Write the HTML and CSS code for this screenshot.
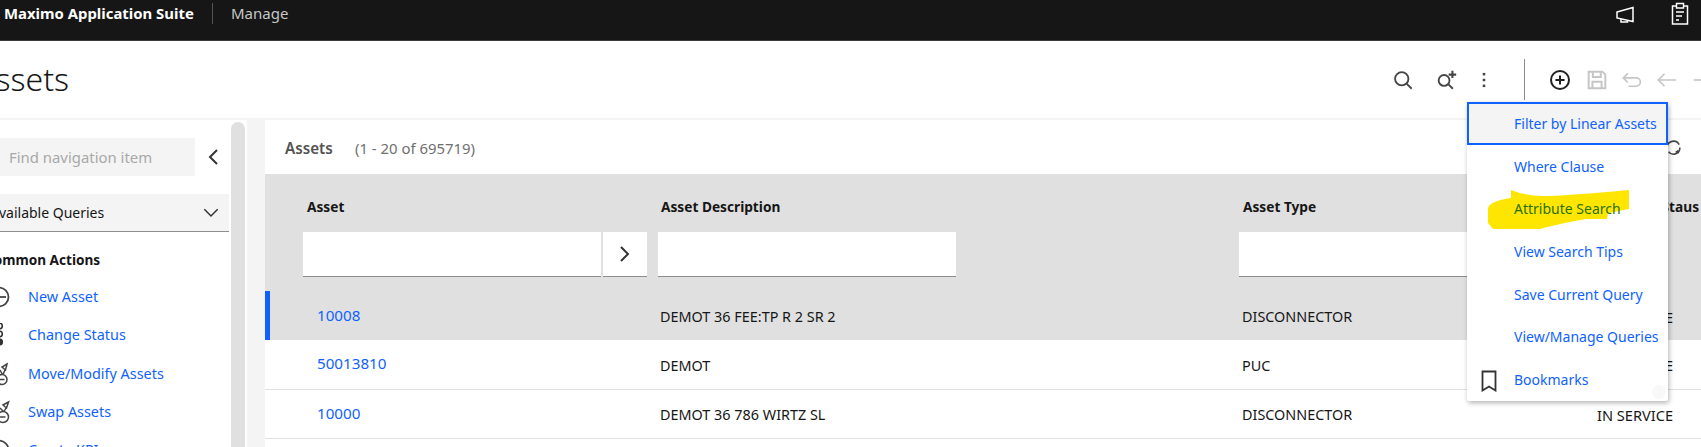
FILE: index.html
```html
<!DOCTYPE html>
<html lang="en">
<head>
<meta charset="utf-8">
<title>Assets - Maximo Application Suite</title>
<link rel="stylesheet" href="styles.css">
</head>
<body>
<div class="page">
  <header class="topbar">
    <div class="brand">Maximo Application Suite</div>
    <div class="appname">Manage</div>
    <div class="top-icons">
      <svg class="ic-top" viewBox="0 0 24 24" fill="none" stroke="#fff" stroke-width="1.5"><path d="M4 10 20 5.500v14L4 16z"/><path d="M8 17v3h6.500v-1.500"/></svg>
      <svg class="ic-top" viewBox="0 0 24 24" fill="none" stroke="#fff" stroke-width="1.5"><rect x="4.500" y="4" width="15" height="18"/><rect x="8.500" y="1.500" width="7" height="4.500" fill="#161616"/><path d="M8 10h8M8 14h6M8 18h3"/></svg>
    </div>
  </header>
  <div class="titlebar">
    <h1 class="title">Assets</h1>
    <div class="tools">
      <svg class="ic" viewBox="0 0 24 24" fill="none" stroke="#444" stroke-width="2.200"><circle cx="10.500" cy="10.500" r="8"/><path d="m16 16 6.500 6.500"/></svg>
      <svg class="ic tool-addq" viewBox="0 0 24 24" fill="none" stroke="#444" stroke-width="2.200"><circle cx="8.500" cy="12.500" r="6.500"/><path d="m13.500 17 5.500 5.500"/><path d="M18.500 1v8.500M14 5.500h9" stroke-width="2.500"/></svg>
      <svg class="ic tool-more" viewBox="0 0 24 24" fill="#444"><rect x="10.500" y="3.500" width="3" height="3"/><rect x="10.500" y="10.500" width="3" height="3"/><rect x="10.500" y="17.500" width="3" height="3"/></svg>
      <span class="tool-sep"></span>
      <svg class="ic" viewBox="0 0 24 24" fill="none" stroke="#222" stroke-width="2.400"><circle cx="12" cy="12" r="10.800"/><path d="M12 6.500v11M6.500 12h11"/></svg>
      <svg class="ic tool-save" viewBox="0 0 24 24" fill="none" stroke="#c6c6c6" stroke-width="2.400"><path d="M2 2h16.500L22 5.500V22H2z"/><path d="M7 2v6.500h9.500V2M6.500 22v-8h11v8"/></svg>
      <svg class="ic tool-undo" viewBox="0 0 24 24" fill="none" stroke="#c6c6c6" stroke-width="2"><path d="M7 4 1.500 9.500 7 15"/><path d="M1.500 9.500H17a5 5 0 0 1 0 10H8"/></svg>
      <svg class="ic tool-back" viewBox="0 0 24 24" fill="none" stroke="#c6c6c6" stroke-width="2"><path d="M9 4.500 1.500 12 9 19.500M1.500 12H23"/></svg>
      <svg class="ic tool-next" viewBox="0 0 24 24" fill="none" stroke="#c6c6c6" stroke-width="2"><path d="M2 12h22"/></svg>
    </div>
  </div>
  <div class="body">
    <aside class="side">
      <div class="side-col">
        <div class="find-row">
          <div class="find">Find navigation item</div>
          <svg class="chev-l" viewBox="0 0 16 24" fill="none" stroke="#333" stroke-width="2"><path d="M12 5 5 12l7 7"/></svg>
        </div>
        <div class="queries">
          <span class="queries-label">Available Queries</span>
          <svg class="chev-d" viewBox="0 0 24 16" fill="none" stroke="#333" stroke-width="1.800"><path d="m4 3.500 8 8 8-8"/></svg>
        </div>
        <div class="common">Common Actions</div>
        <ul class="actions">
          <li class="action">
            <svg class="aic" viewBox="0 0 24 24" fill="none" stroke="#444" stroke-width="1.800"><circle cx="-1" cy="12" r="9.500"/><path d="M-3 12h9"/></svg>
            <a>New Asset</a>
          </li>
          <li class="action">
            <svg class="aic" viewBox="0 0 24 24" fill="none" stroke="#333" stroke-width="1.600"><circle cx="-.5" cy="3" r="2.800"/><circle cx="-.5" cy="11" r="2.800"/><circle cx="-.5" cy="19" r="2.800" fill="#333"/></svg>
            <a>Change Status</a>
          </li>
          <li class="action">
            <svg class="aic" viewBox="0 0 24 24" fill="none" stroke="#444" stroke-width="1.500"><circle cx="2" cy="17.500" r="5"/><path d="M0 17.500h4.500M7 2 2 5l3.500 3zM5 8l-2 4.500M0 8l2.500 4.500"/></svg>
            <a>Move/Modify Assets</a>
          </li>
          <li class="action">
            <svg class="aic" viewBox="0 0 24 24" fill="none" stroke="#444" stroke-width="1.500"><circle cx="3" cy="17" r="5.500"/><path d="M0 17h5.500M8.500 2 3 5l3.500 3zM6 8l-2 3.500M0 8l3.500 3.500"/></svg>
            <a>Swap Assets</a>
          </li>
          <li class="action">
            <svg class="aic" viewBox="0 0 24 24" fill="none" stroke="#444" stroke-width="1.800"><circle cx="-1" cy="12" r="9.500"/></svg>
            <a>Create KPI</a>
          </li>
        </ul>
      </div>
      <div class="scrollbar"></div>
    </aside>
    <div class="gutter"></div>
    <main class="main">
      <div class="list-head">
        <span class="list-title">Assets</span>
        <span class="list-count">(1 - 20 of 695719)</span>
        <svg class="refresh" viewBox="0 0 24 24" fill="none" stroke="#444" stroke-width="2.200"><path d="M3 12A9 9 0 0 1 20 8"/><path d="M21 12a9 9 0 0 1-16 6"/><path d="M22 14l-1-3-3 2" transform="translate(-3 6)"/></svg>
      </div>
      <div class="table">
        <div class="row thead">
          <div class="cell c-asset"><span class="th">Asset</span></div>
          <div class="cell c-desc"><span class="th">Asset Description</span></div>
          <div class="cell c-type"><span class="th">Asset Type</span></div>
          <div class="cell c-status"><span class="th">Staus</span></div>
        </div>
        <div class="row filters">
          <div class="filter-asset">
            <div class="input i-asset"></div>
            <div class="input i-go"><svg class="chev-r" viewBox="0 0 16 24" fill="none" stroke="#333" stroke-width="2"><path d="m4 5 7 7-7 7"/></svg></div>
          </div>
          <div class="input i-desc"></div>
          <div class="input i-type"></div>
        </div>
        <div class="row data selected">
          <div class="cell c-asset"><a class="link">10008</a></div>
          <div class="cell c-desc">DEMOT 36 FEE:TP R 2 SR 2</div>
          <div class="cell c-type">DISCONNECTOR</div>
          <div class="cell c-status">IN SERVICE</div>
        </div>
        <div class="row data">
          <div class="cell c-asset"><a class="link">50013810</a></div>
          <div class="cell c-desc">DEMOT</div>
          <div class="cell c-type">PUC</div>
          <div class="cell c-status">IN SERVICE</div>
        </div>
        <div class="row data">
          <div class="cell c-asset"><a class="link">10000</a></div>
          <div class="cell c-desc">DEMOT 36 786 WIRTZ SL</div>
          <div class="cell c-type">DISCONNECTOR</div>
          <div class="cell c-status">IN SERVICE</div>
        </div>
      </div>
    </main>
  </div>
  <nav class="menu">
    <a class="mi focus">Filter by Linear Assets</a>
    <a class="mi">Where Clause</a>
    <a class="mi marked">
      <svg class="marker" viewBox="0 0 141 39" preserveAspectRatio="none"><path fill="#ffe600" d="M23 0Q38 6 56 6T141 0V19L120 23 119 29H98Q70 34 52 39H5L0 33V18Q2 11 23 8z"/></svg>
      <span class="marked-text">Attribute Search</span>
    </a>
    <a class="mi">View Search Tips</a>
    <a class="mi">Save Current Query</a>
    <a class="mi">View/Manage Queries</a>
    <a class="mi">
      <svg class="bm" viewBox="0 0 16 22" fill="none" stroke="#333" stroke-width="1.800"><path d="M1.500 1.500h13v19L8 16.500l-6.500 4z"/></svg>
      Bookmarks
    </a>
    <span class="menu-dot"></span>
  </nav>
</div>
</body>
</html>
```
FILE: styles.css
```css
* { box-sizing: border-box; }
html, body { margin: 0; padding: 0; }
body { width: 1701px; height: 447px; overflow: hidden; background: #fff; font-family: "Noto Sans", "Open Sans", sans-serif; font-size: 14px; color: #161616; }
a { color: #0f62fe; text-decoration: none; }
.page { position: relative; width: 1701px; height: 447px; overflow: hidden; }

.topbar { height: 41px; background: #161616; border-bottom: 1px solid #3a3a3a; display: flex; align-items: center; padding-left: 4px; padding-bottom: 13px; color: #fff; }
.brand { font-weight: 700; font-size: 14.900px; width: 209px; border-right: 1px solid #555; height: 21px; line-height: 20px; white-space: nowrap; }
.appname { color: #c6c6c6; font-size: 15px; padding-left: 18px; line-height: 21px; }
.top-icons { margin-left: auto; display: flex; gap: 31px; margin-right: 9px; }
.ic-top { width: 24px; height: 24px; }

.titlebar { height: 79px; display: flex; align-items: center; border-bottom: 2px solid #f4f4f4; overflow: hidden; }
.title { margin: 0 0 2px -24px; font-weight: 300; font-size: 32px; line-height: 40px; color: #161616; }
.tools { margin-left: auto; display: flex; align-items: center; height: 100%; margin-right: -11px; }
.ic { width: 20px; height: 20px; flex: none; }
.tool-addq { margin-left: 24px; }
.tool-more { margin-left: 17px; }
.tool-sep { width: 1px; height: 41px; background: #8d8d8d; margin: 18px 25px 0 30px; align-self: flex-start; }
.tool-save { margin-left: 17px; }
.tool-undo { margin-left: 15px; }
.tool-back { margin-left: 15px; }
.tool-next { margin-left: 15px; }

.body { display: flex; height: 327px; background: #fff; }
.side { width: 247px; display: flex; flex: none; overflow: hidden; }
.side-col { width: 231px; flex: none; }
.scrollbar { width: 14px; height: 400px; margin-top: 2px; background: #e0e0e0; border-radius: 7px 7px 0 0; }
.find-row { display: flex; align-items: center; padding-top: 18px; }
.find { width: 195px; height: 38px; background: #f4f4f4; color: #a8a8a8; line-height: 38px; padding-left: 9px; font-size: 14.900px; white-space: nowrap; }
.chev-l { width: 16px; height: 24px; margin-left: 10px; }
.queries { width: 229px; height: 38px; margin-top: 18px; background: #f4f4f4; border-bottom: 1px solid #8d8d8d; display: flex; align-items: center; justify-content: space-between; padding-right: 8px; overflow: hidden; }
.queries-label { margin-left: -10px; white-space: nowrap; font-size: 14px; }
.chev-d { width: 20px; height: 14px; }
.common { font-weight: 700; margin-left: -15px; line-height: 20px; margin-top: 18px; white-space: nowrap; font-size: 13.600px; }
.actions { list-style: none; margin: 8px 0 0; padding: 0; }
.action { height: 38.300px; display: flex; align-items: center; }
.action a { font-size: 14.400px; line-height: 20px; white-space: nowrap; }
.aic { width: 24px; height: 24px; flex: none; margin-right: 4px; }

.gutter { width: 18px; flex: none; background: #f4f4f4; }
.main { flex: 1; min-width: 0; }
.list-head { height: 54px; display: flex; align-items: center; padding-left: 20px; padding-top: 1px; }
.list-title { font-weight: 600; font-size: 15.200px; color: #525252; width: 70px; }
.list-count { color: #6f6f6f; font-size: 14.900px; }
.refresh { width: 17px; height: 17px; margin-left: auto; margin-right: 19px; }

.row { display: grid; grid-template-columns: 38px 355px 581px 355px 107px; }
.thead { height: 58px; background: #e0e0e0; align-items: center; padding-top: 6px; }
.cell { white-space: nowrap; padding-left: 3px; }
.c-asset { grid-column: 2; }
.c-desc { grid-column: 3; }
.c-type { grid-column: 4; }
.c-status { grid-column: 5; }
.th { font-weight: 700; font-size: 13.700px; color: #161616; }
.thead .c-asset, .thead .c-type { padding-left: 4px; }
.thead .c-status { padding: 0 2px 0 0; text-align: right; }
.filters { height: 59px; background: #e0e0e0; display: flex; align-items: flex-start; padding-left: 38px; }
.filter-asset { display: flex; gap: 2px; margin-right: 11px; }
.input { background: #fff; height: 45px; border-bottom: 1px solid #8d8d8d; flex: none; }
.i-asset { width: 298px; }
.i-go { width: 44px; display: flex; align-items: center; justify-content: center; }
.i-desc { width: 298px; margin-right: 283px; }
.i-type { width: 229px; }
.chev-r { width: 16px; height: 24px; }
.data { height: 49.500px; padding-top: 2px; border-bottom: 1px solid #e0e0e0; align-items: center; font-size: 14.400px; background: #fff; }
.data .c-asset { padding: 0 0 4px 14px; }
.data .c-desc { padding-left: 2px; }
.data .c-status { font-size: 14.600px; }
.link { font-size: 15.200px; }
.selected { background: #e0e0e0; height: 49px; border-bottom: 0; box-shadow: inset 5px 0 0 #0f62fe; }

.menu { position: absolute; left: 1467px; top: 102px; width: 201px; height: 299px; background: #fff; box-shadow: 1px 2px 5px rgba(0,0,0,.3); display: flex; flex-direction: column; border-radius: 2px; }
.mi { height: 42.700px; flex: none; display: flex; align-items: center; padding-left: 47px; font-size: 14px; white-space: nowrap; position: relative; }
.focus { background: #f4f4f4; outline: 2px solid #0f62fe; outline-offset: -2px; }
.bm { position: absolute; left: 14px; top: 12px; width: 16px; height: 22px; }
.marker { position: absolute; left: 21px; top: 3px; width: 141px; height: 39px; }
.marked-text { position: relative; color: #2a7000; }
.menu-dot { position: absolute; left: 185px; top: 283px; width: 14px; height: 14px; border-radius: 50%; background: #f9f9f9; }
```
